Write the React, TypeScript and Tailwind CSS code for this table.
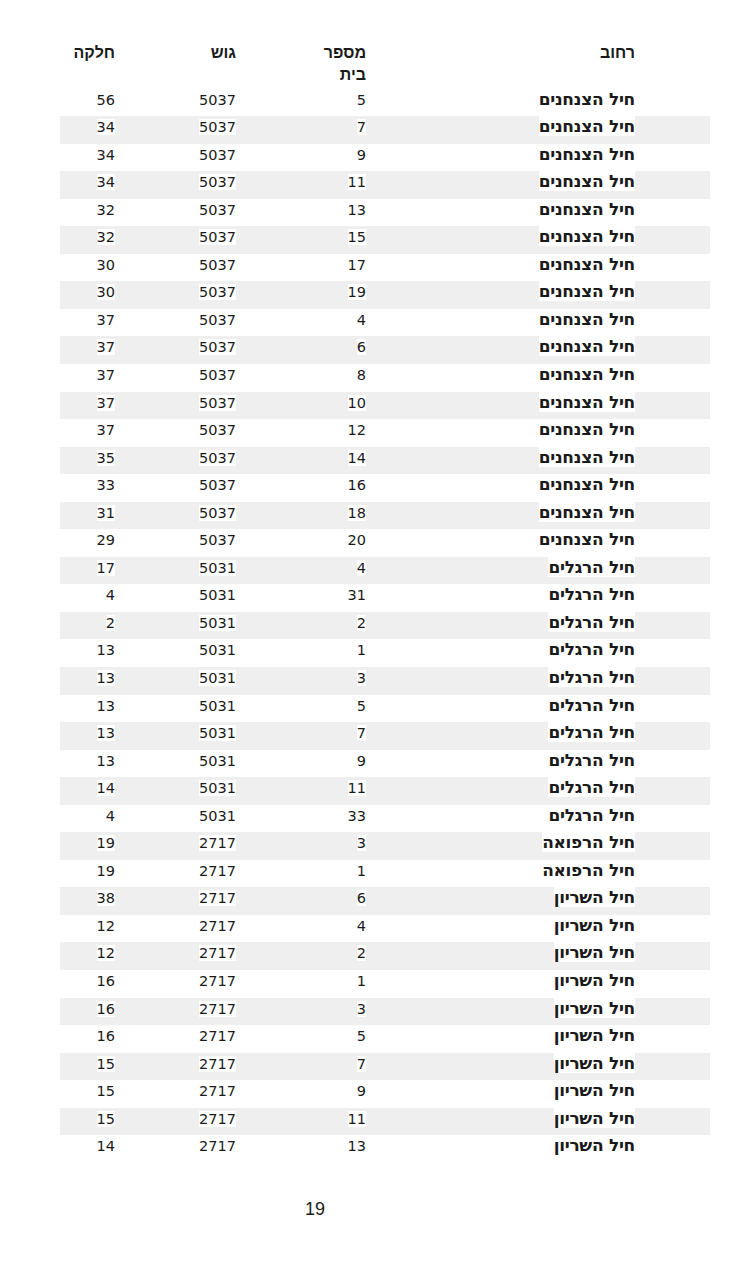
import React from "react";

type Row = [string, string, string, string];

const build = (): Row[] => {
  const rows: Row[] = [];
  const a = "חיל הצנחנים";
  [
    ["5", "56"], ["7", "34"], ["9", "34"], ["11", "34"], ["13", "32"], ["15", "32"],
    ["17", "30"], ["19", "30"], ["4", "37"], ["6", "37"], ["8", "37"], ["10", "37"],
    ["12", "37"], ["14", "35"], ["16", "33"], ["18", "31"], ["20", "29"],
  ].forEach(([h, c]) => rows.push([a, h, "5037", c]));
  const b = "חיל הרגלים";
  [
    ["4", "17"], ["31", "4"], ["2", "2"], ["1", "13"], ["3", "13"], ["5", "13"],
    ["7", "13"], ["9", "13"], ["11", "14"], ["33", "4"],
  ].forEach(([h, c]) => rows.push([b, h, "5031", c]));
  const r = "חיל הרפואה";
  [["3", "19"], ["1", "19"]].forEach(([h, c]) => rows.push([r, h, "2717", c]));
  const s = "חיל השריון";
  [
    ["6", "38"], ["4", "12"], ["2", "12"], ["1", "16"], ["3", "16"], ["5", "16"],
    ["7", "15"], ["9", "15"], ["11", "15"], ["13", "14"],
  ].forEach(([h, c]) => rows.push([s, h, "2717", c]));
  return rows;
};

const rows = build();

export default function App() {
  return (
    <div className="w-[739px] h-[1285px] bg-white text-[#1a1a1a] overflow-hidden">
      <div className="pt-[42px] pl-[60px] w-[710px]" dir="rtl">
        <div className="grid grid-cols-[75px_269px_130px_121px_55px] h-[46.5px] font-bold text-[16px] leading-[22px] font-['Liberation_Sans','DejaVu_Sans',sans-serif]">
          <div />
          <div>רחוב</div>
          <div>
            מספר
            <br />
            בית
          </div>
          <div>גוש</div>
          <div>חלקה</div>
        </div>
        {rows.map((row, i) => (
          <div
            key={i}
            className={
              "grid grid-cols-[75px_269px_130px_121px_55px] h-[27.55px] items-start pt-[1px] " +
              (i % 2 === 1 ? "bg-[#efefef]" : "bg-white")
            }
          >
            <div />
            <div className="leading-[18px]">
              <span className="bg-white font-bold text-[17px] leading-[18px] font-['DejaVu_Sans','Liberation_Sans',sans-serif] tracking-[-0.3px]">
                {row[0]}
              </span>
            </div>
            {[row[1], row[2], row[3]].map((v, j) => (
              <div key={j} className="leading-[18px]">
                <span className="bg-white text-[14.5px] leading-[18px] font-['DejaVu_Sans',sans-serif]">
                  {v}
                </span>
              </div>
            ))}
          </div>
        ))}
      </div>
      <div className="mt-[35px] w-[630px] text-center text-[18px] leading-[22px] font-['Liberation_Sans',sans-serif]">
        19
      </div>
    </div>
  );
}
